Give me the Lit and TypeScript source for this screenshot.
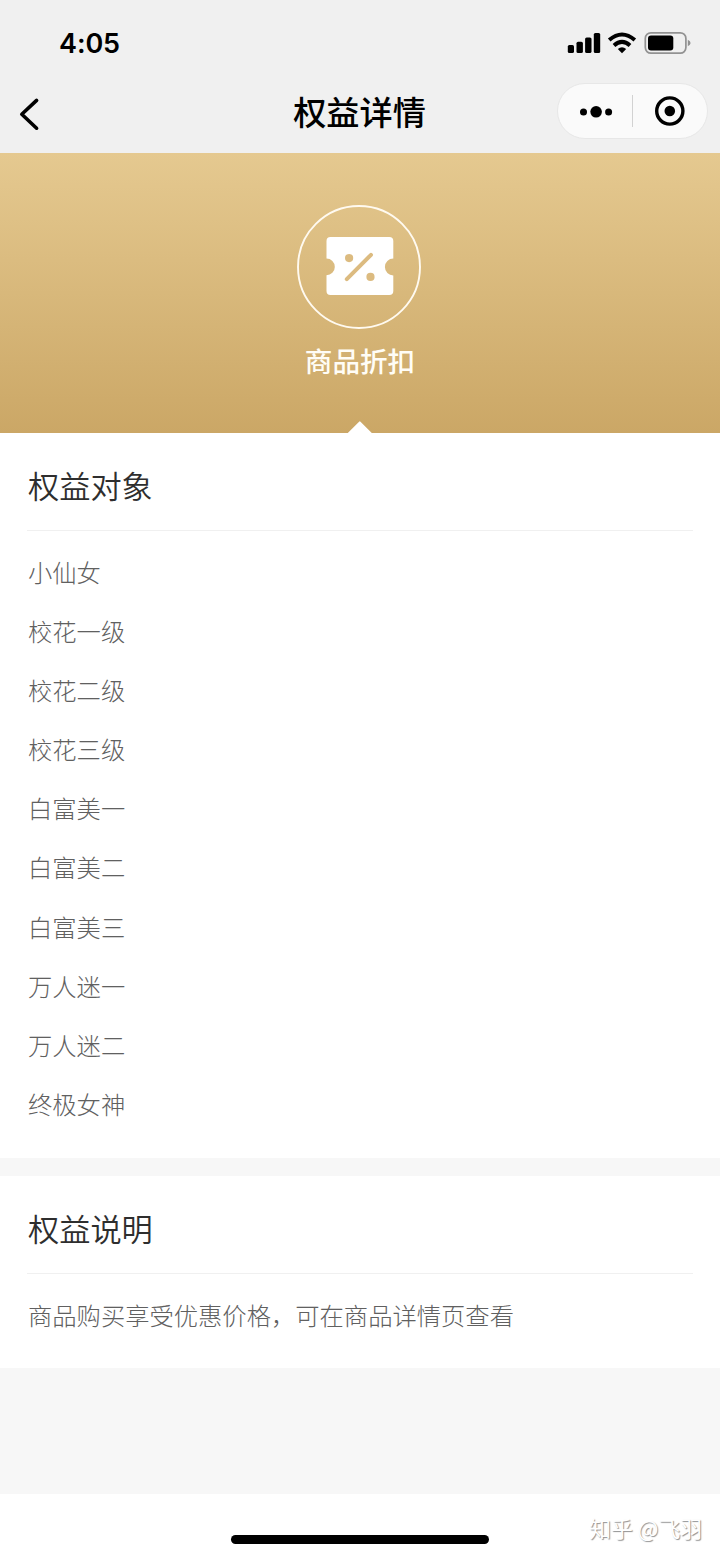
import { LitElement, html, css } from "lit";
import { customElement, property } from "lit/decorators.js";

@customElement("status-bar")
class StatusBar extends LitElement {
  static styles = css`
    :host { display: flex; justify-content: space-between; height: 82px; padding: 0 29px 0 59px; box-sizing: border-box; }
    .time { font: 600 27px/88px Inter, sans-serif; letter-spacing: -0.1px; color: #000; }
    .icons { width: 124px; height: 24px; margin-top: 31px; display: block; }
  `;
  render() {
    return html`
      <span class="time">4:05</span>
      <svg class="icons" viewBox="567 31 124 24">
        <rect x="567.8" y="45" width="6.2" height="8" rx="1.6" />
        <rect x="576.5" y="41.7" width="6.4" height="11.3" rx="1.6" />
        <rect x="585.1" y="37.4" width="6.4" height="15.6" rx="1.6" />
        <rect x="593.8" y="33" width="6.4" height="20" rx="1.6" />
        <g fill="none" stroke="#000" stroke-width="4">
          <path d="M609.2 40 Q622 29.1 634.8 40" />
          <path d="M614 45.4 Q622 38.4 630 45.4" />
        </g>
        <path d="M617.8 49 Q622 45.4 626.2 49 L622 53.2Z" />
        <rect x="645.3" y="32.8" width="40.6" height="20.4" rx="5.6" fill="none" stroke="#929292" stroke-width="1.7" />
        <rect x="648" y="35.5" width="25.3" height="15" rx="3" />
        <path d="M687.8 39.8 Q690.6 41 690.6 43 T687.8 46.2Z" fill="#929292" />
      </svg>
    `;
  }
}

@customElement("nav-bar")
class NavBar extends LitElement {
  @property() heading = "";
  static styles = css`
    :host { display: grid; grid-template-columns: 1fr auto 1fr; height: 71px; padding: 0 12px 0 18px; box-sizing: border-box; }
    .back { display: block; width: 22px; height: 34px; margin-top: 15px; }
    .title { margin: 0 0 0 -7px; font: 500 33.2px/57px "Noto Sans CJK SC", sans-serif; color: #000; }
    .capsule { display: block; justify-self: end; width: 152px; height: 57px; }
  `;
  render() {
    return html`
      <svg class="back" viewBox="18 97 22 34">
        <path d="M36.6 100.4 L21.8 114.3 L36.6 128.2" fill="none" stroke="#000" stroke-width="3.6" stroke-linecap="round" stroke-linejoin="round" />
      </svg>
      <h1 class="title">${this.heading}</h1>
      <svg class="capsule" viewBox="556 82 152 57">
        <rect x="557.5" y="83.5" width="150" height="55" rx="27.5" fill="#fafafa" stroke="#e7e7e7" />
        <circle cx="583.5" cy="112" r="3.5" />
        <circle cx="596.1" cy="111.8" r="5.8" />
        <circle cx="608.6" cy="112" r="3.5" />
        <path d="M632.5 95V127" stroke="#d2d2d2" />
        <circle cx="669.8" cy="111" r="13.1" fill="none" stroke="#000" stroke-width="3.4" />
        <circle cx="669.8" cy="111" r="5.3" />
      </svg>
    `;
  }
}

@customElement("benefit-hero")
class BenefitHero extends LitElement {
  @property() label = "";
  static styles = css`
    :host {
      display: flex; flex-direction: column; align-items: center; height: 280px; box-sizing: border-box;
      padding-top: 51px; background: linear-gradient(#e5c990, #cba766);
    }
    .badge { display: block; width: 126px; height: 126px; margin-left: -2px; }
    .label { font: 500 27.6px/40px "Noto Sans CJK SC", sans-serif; color: #fffdf6; margin-top: 10px; }
    .caret { display: block; width: 26px; height: 12px; margin-top: auto; }
  `;
  render() {
    return html`
      <svg class="badge" viewBox="296 204 126 126">
        <circle cx="359" cy="267" r="61" fill="none" stroke="#fffaf0" stroke-width="1.9" />
        <path fill="#fff" d="M330.5 237H389.3a4 4 0 0 1 4 4V258.6a8.4 8.4 0 0 0 0 16.8V291a4 4 0 0 1 -4 4H330.5a4 4 0 0 1 -4 -4V275.2a8.3 8.3 0 0 0 0 -16.6V241a4 4 0 0 1 4 -4Z" />
        <g fill="#dcbb80">
          <circle cx="349.1" cy="258.1" r="4.1" />
          <circle cx="370.5" cy="276.9" r="4.1" />
        </g>
        <path d="M371 254.8L346.8 279.2" stroke="#dcbb80" stroke-width="4" stroke-linecap="round" />
      </svg>
      <span class="label">${this.label}</span>
      <svg class="caret" viewBox="0 0 26 12"><path d="M.8 12L12.1 .7Q12.8 0 13.5 .7L24.8 12Z" fill="#fff" /></svg>
    `;
  }
}

@customElement("benefit-section")
class BenefitSection extends LitElement {
  @property() heading = "";
  @property({ attribute: false }) lines: string[] = [];
  static styles = css`
    :host { display: block; background: #fff; padding: 0 27px 22.5px; font-family: "Noto Sans CJK SC", sans-serif; }
    .heading { margin: 0 0 10.6px; padding: 0 1px; height: 97px; font-size: 31.2px; font-weight: 350; line-height: 103px; color: #2e2e2e; border-bottom: 1px solid #f0f0f0; }
    .line { margin: 0; padding: 0 1px; font-size: 24.3px; font-weight: 300; line-height: 59.15px; color: #606060; }
  `;
  render() {
    return html`
      <h2 class="heading">${this.heading}</h2>
      ${this.lines.map((line) => html`<p class="line">${line}</p>`)}
    `;
  }
}

@customElement("app-root")
class AppRoot extends LitElement {
  static styles = css`
    :host { display: flex; flex-direction: column; width: 720px; height: 1558px; background: #f7f7f7; overflow: hidden; }
    .top { background: #f0f0f0; height: 153px; flex: none; }
    .audience { height: 725px; box-sizing: border-box; margin-bottom: 18px; }
    .notes { height: 192px; box-sizing: border-box; }
    .bottom { margin-top: auto; height: 64px; background: #fff; display: grid; grid-template-columns: 1fr 258px 1fr; box-sizing: border-box; padding-right: 18px; padding-left: 18px; }
    .home { grid-column: 2; height: 9px; border-radius: 5px; background: #000; margin-top: 41px; }
    .mark { justify-self: end; font: 400 21.8px/67px "Noto Sans CJK SC", sans-serif; color: #fff; text-shadow: 1px 1px 1px #909090; white-space: nowrap; }
  `;
  private members = ["小仙女", "校花一级", "校花二级", "校花三级", "白富美一", "白富美二", "白富美三", "万人迷一", "万人迷二", "终极女神"];
  render() {
    return html`
      <header class="top">
        <status-bar></status-bar>
        <nav-bar heading="权益详情"></nav-bar>
      </header>
      <benefit-hero label="商品折扣"></benefit-hero>
      <benefit-section class="audience" heading="权益对象" .lines=${this.members}></benefit-section>
      <benefit-section class="notes" heading="权益说明" .lines=${["商品购买享受优惠价格，可在商品详情页查看"]}></benefit-section>
      <footer class="bottom">
        <div class="home"></div>
        <span class="mark">知乎 @飞羽</span>
      </footer>
    `;
  }
}
